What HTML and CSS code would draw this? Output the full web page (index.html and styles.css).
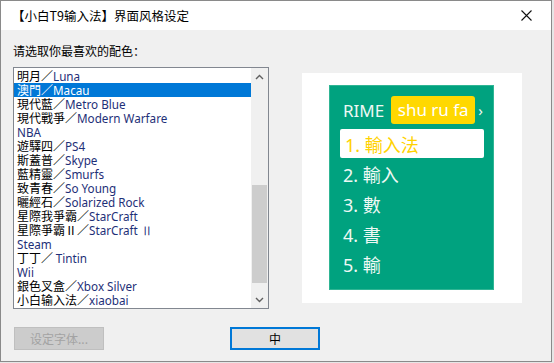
FILE: index.html
```html
<!DOCTYPE html>
<html lang="zh">
<head>
<meta charset="utf-8">
<link rel="stylesheet" href="styles.css">
</head>
<body>
<div class="window">
  <div class="titlebar">
    <span class="title">【小白T9输入法】界面风格设定</span>
    <span class="close">
      <svg width="11" height="11" viewBox="0 0 11 11"><path d="M0.5 0.5 L10.5 10.5 M10.5 0.5 L0.5 10.5" stroke="#111" stroke-width="1.1" fill="none"/></svg>
    </span>
  </div>
  <div class="content">
    <div class="label">请选取你最喜欢的配色：</div>
    <div class="main">
      <div class="listbox">
        <ul class="items">
          <li>明月／<span class="en">Luna</span></li>
          <li class="sel">澳門／<span class="en">Macau</span></li>
          <li>現代藍／<span class="en">Metro Blue</span></li>
          <li>現代戰爭／<span class="en">Modern Warfare</span></li>
          <li><span class="en">NBA</span></li>
          <li>遊驛四／<span class="en">PS4</span></li>
          <li>斯蓋普／<span class="en">Skype</span></li>
          <li>藍精靈／<span class="en">Smurfs</span></li>
          <li>致青春／<span class="en">So Young</span></li>
          <li>曬經石／<span class="en">Solarized Rock</span></li>
          <li>星際我爭霸／<span class="en">StarCraft</span></li>
          <li>星際爭霸Ⅱ／<span class="en">StarCraft Ⅱ</span></li>
          <li><span class="en">Steam</span></li>
          <li>丁丁／ <span class="en">Tintin</span></li>
          <li><span class="en">Wii</span></li>
          <li>銀色叉盒／<span class="en">Xbox Silver</span></li>
          <li>小白输入法／<span class="en">xiaobai</span></li>
        </ul>
        <div class="scrollbar">
          <div class="arrow">
            <svg width="9" height="6" viewBox="0 0 9 6"><path d="M1 5 L4.5 1.5 L8 5" stroke="#606060" stroke-width="1.4" fill="none"/></svg>
          </div>
          <div class="track"><div class="thumb"></div></div>
          <div class="arrow">
            <svg width="9" height="6" viewBox="0 0 9 6"><path d="M1 1 L4.5 4.5 L8 1" stroke="#606060" stroke-width="1.4" fill="none"/></svg>
          </div>
        </div>
      </div>
      <div class="preview">
        <div class="panel">
          <div class="preedit">
            <span class="rime">RIME</span>
            <span class="code">shu ru fa</span>
            <span class="more">›</span>
          </div>
          <div class="cand hl">1. 輸入法</div>
          <div class="cand">2. 輸入</div>
          <div class="cand">3. 數</div>
          <div class="cand">4. 書</div>
          <div class="cand">5. 輸</div>
        </div>
      </div>
    </div>
    <div class="buttons">
      <div class="btn disabled">设定字体...</div>
      <div class="btn default">中</div>
    </div>
  </div>
</div>
</body>
</html>
```

FILE: styles.css
```css
* { box-sizing: border-box; }
html, body { margin: 0; padding: 0; }
body {
  background: #e6e6e6;
  width: 554px;
  height: 363px;
  font-family: "Noto Sans", "Noto Sans CJK SC", sans-serif;
  font-size: 12px;
  color: #000;
}
.window {
  width: 552px;
  height: 362px;
  border: 1px solid #8a8a8a;
  background: #f0f0f0;
  display: flex;
  flex-direction: column;
}
.titlebar {
  height: 29px;
  background: #fff;
  display: flex;
  align-items: center;
  justify-content: space-between;
  padding-left: 11px;
}
.title {
  font-family: "Noto Sans CJK SC", sans-serif;
  font-size: 12.5px;
  line-height: 16px;
  color: #000;
}
.close {
  width: 46px;
  height: 29px;
  display: flex;
  align-items: center;
  justify-content: center;
  padding-right: 4px;
}
.content {
  padding: 13px 0 0 12px;
  display: flex;
  flex-direction: column;
}
.label {
  font-family: "Noto Sans CJK SC", sans-serif;
  font-size: 12px;
  line-height: 16px;
  height: 16px;
}
.main {
  margin-top: 8px;
  display: flex;
  align-items: flex-start;
}
.listbox {
  width: 256px;
  height: 242px;
  border: 1px solid #828790;
  background: #fff;
  display: flex;
}
.items {
  list-style: none;
  margin: 0;
  padding: 1px 0 0 0;
  flex: 1;
}
.items li {
  height: 14px;
  line-height: 14px;
  padding-left: 3px;
  white-space: nowrap;
  font-family: "Noto Sans CJK TC", sans-serif;
  font-size: 12px;
  color: #000;
}
.items li .en {
  font-family: "Noto Sans", sans-serif;
  font-size: 11.7px;
  color: #1e2f78;
}
.items li.sel {
  background: #0078d7;
  color: #fff;
}
.items li.sel .en { color: #fff; }
.scrollbar {
  width: 17px;
  background: #f0f0f0;
  display: flex;
  flex-direction: column;
}
.arrow {
  height: 17px;
  display: flex;
  align-items: center;
  justify-content: center;
}
.track {
  flex: 1;
  padding: 100px 1px 0 1px;
}
.thumb {
  height: 98px;
  background: #cdcdcd;
}
.preview {
  margin-left: 33px;
  margin-top: 6px;
  width: 220px;
  height: 230px;
  background: #fff;
  padding: 12px 0 0 27px;
}
.panel {
  width: 165px;
  height: 205px;
  background: #00a27f;
  border: 1px solid #2fb594;
  padding: 10px 0 0 10px;
  display: flex;
  flex-direction: column;
}
.preedit {
  height: 28px;
  display: flex;
  align-items: center;
  color: #eef8f4;
  font-family: "Noto Sans", sans-serif;
  font-size: 17px;
}
.rime { margin-left: 3px; }
.code {
  margin-left: 7px;
  height: 28px;
  width: 84px;
  background: #ffd800;
  border-radius: 3px;
  color: #fff;
  display: flex;
  align-items: center;
  justify-content: center;
  padding-bottom: 1px;
}
.more {
  margin-left: 3px;
  font-size: 15px;
  line-height: 16px;
}
.cand {
  height: 29px;
  margin-bottom: 1px;
  width: 144px;
  padding-left: 3px;
  display: flex;
  align-items: center;
  color: #eef8f4;
  font-family: "Noto Sans", "Noto Sans CJK TC", sans-serif;
  font-size: 18px;
}
.preedit + .cand { margin-top: 5px; }
.cand.hl {
  background: #fff;
  border-radius: 2px;
  color: #ffd200;
  padding-left: 5px;
}
.buttons {
  margin-top: 18px;
  display: flex;
  padding-left: 1px;
}
.btn {
  width: 90px;
  height: 23px;
  display: flex;
  align-items: center;
  justify-content: center;
  font-family: "Noto Sans CJK SC", sans-serif;
  font-size: 12px;
}
.btn.disabled {
  background: #cccccc;
  border: 1px solid #bfbfbf;
  color: #a3a3a3;
}
.btn.default {
  margin-left: 126px;
  background: #e1e1e1;
  border: 2px solid #0078d7;
  color: #000;
}
```
